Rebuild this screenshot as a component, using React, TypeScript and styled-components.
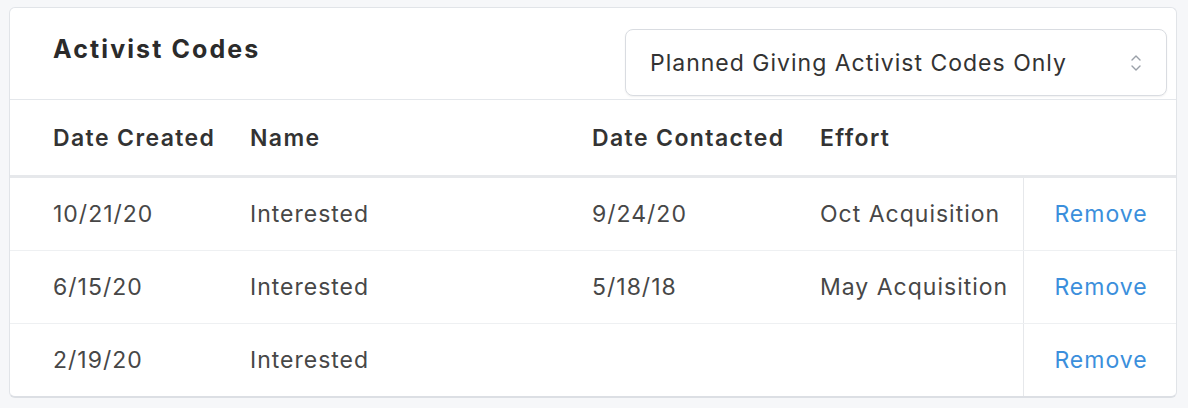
import React from "react";
import styled, { createGlobalStyle } from "styled-components";

const Global = createGlobalStyle`
  html, body { margin: 0; padding: 0; background: #f6f7f9; }
  body { font-family: Inter, "Noto Sans", "Liberation Sans", sans-serif; -webkit-font-smoothing: antialiased; }
`;

const Page = styled.div`
  padding: 7px 11px 12px 9px;
`;

const Card = styled.section`
  width: 1168px;
  box-sizing: border-box;
  background: #fff;
  border: 1px solid #e1e4e8;
  border-bottom: 2px solid #dcdfe4;
  border-radius: 6px;
  overflow: hidden;
`;

const CardHeader = styled.header`
  display: flex;
  justify-content: space-between;
  align-items: flex-start;
  height: 92px;
  box-sizing: border-box;
  padding: 21px 9px 0 43px;
  border-bottom: 1px solid #e4e7eb;
`;

const Title = styled.h2`
  margin: 5px 0 0;
  font-size: 25px;
  font-weight: 700;
  color: #2b2b2b;
  letter-spacing: 2.1px;
`;

const SelectBox = styled.div`
  width: 542px;
  height: 67px;
  box-sizing: border-box;
  display: flex;
  align-items: center;
  justify-content: space-between;
  padding: 0 24px 0 24px;
  border: 1px solid #d9dce1;
  border-radius: 8px;
  box-shadow: 0 1px 2px rgba(0, 0, 0, 0.06);
  font-size: 23px;
  letter-spacing: 1px;
  color: #333;
  background: #fff;
`;

const Grid = styled.div<{ $header?: boolean; $last?: boolean }>`
  display: grid;
  grid-template-columns: 197px 342px 228px 219px 1fr;
  padding-left: 27px;
  height: ${(p) => (p.$header ? "75px" : "72px")};
  border-bottom: ${(p) =>
    p.$header ? "3px solid #e6e8eb" : p.$last ? "none" : "1px solid #eef0f2"};
`;

const HeadCell = styled.div`
  display: flex;
  align-items: center;
  padding: 0 16px;
  font-size: 23px;
  font-weight: 600;
  letter-spacing: 1.4px;
  color: #333;
  white-space: nowrap;
`;

const Cell = styled.div<{ $action?: boolean }>`
  display: flex;
  align-items: center;
  justify-content: ${(p) => (p.$action ? "center" : "flex-start")};
  padding: ${(p) => (p.$action ? "0 0 0 2px" : "0 16px")};
  font-size: 23px;
  letter-spacing: 1px;
  color: ${(p) => (p.$action ? "#3b8fdc" : "#474747")};
  border-left: ${(p) => (p.$action ? "1px solid #e6e8eb" : "none")};
  white-space: nowrap;
  cursor: ${(p) => (p.$action ? "pointer" : "default")};
`;

const Chevron = () => (
  <svg width="12" height="20" viewBox="0 0 12 20" fill="none" stroke="#9aa0a8" strokeWidth="1.4" strokeLinecap="round" strokeLinejoin="round">
    <path d="M2 7 L6 3 L10 7" />
    <path d="M2 13 L6 17 L10 13" />
  </svg>
);

const rows = [
  { created: "10/21/20", name: "Interested", contacted: "9/24/20", effort: "Oct Acquisition" },
  { created: "6/15/20", name: "Interested", contacted: "5/18/18", effort: "May Acquisition" },
  { created: "2/19/20", name: "Interested", contacted: "", effort: "" },
];

export default function App() {
  return (
    <>
      <Global />
      <Page>
        <Card>
          <CardHeader>
            <Title>Activist Codes</Title>
            <SelectBox>
              <span>Planned Giving Activist Codes Only</span>
              <Chevron />
            </SelectBox>
          </CardHeader>
          <Grid $header>
            <HeadCell>Date Created</HeadCell>
            <HeadCell>Name</HeadCell>
            <HeadCell>Date Contacted</HeadCell>
            <HeadCell>Effort</HeadCell>
            <HeadCell />
          </Grid>
          {rows.map((r, i) => (
            <Grid key={i} $last={i === rows.length - 1}>
              <Cell>{r.created}</Cell>
              <Cell>{r.name}</Cell>
              <Cell>{r.contacted}</Cell>
              <Cell>{r.effort}</Cell>
              <Cell $action>Remove</Cell>
            </Grid>
          ))}
        </Card>
      </Page>
    </>
  );
}
